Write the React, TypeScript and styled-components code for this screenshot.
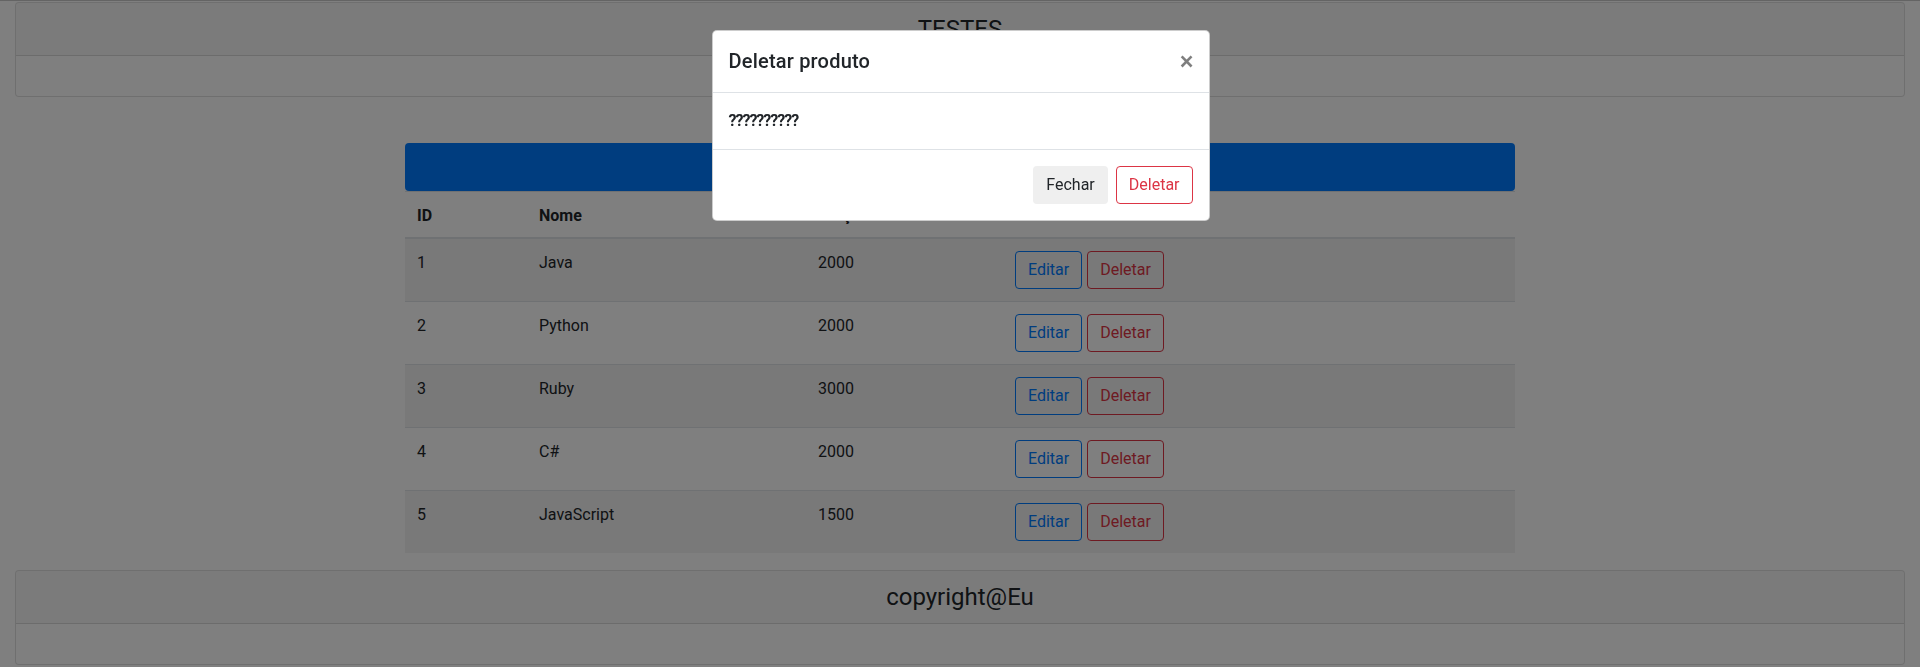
import React from "react";
import styled, { createGlobalStyle } from "styled-components";

const GlobalStyle = createGlobalStyle`
  html, body { margin: 0; padding: 0; overflow: hidden; }
  body {
    font-family: "Segoe UI", Roboto, "Noto Sans", sans-serif;
    font-size: 16px;
    line-height: 1.5;
    color: #212529;
    background: #ffffff;
    border-top: 1px solid #c8c8c8;
  }
  * { box-sizing: border-box; }
`;

const Fluid = styled.div`
  padding: 1px 15px 0;
`;

const Card = styled.div`
  border: 1px solid rgba(0, 0, 0, 0.125);
  border-radius: 4px;
  background: #fff;
  overflow: hidden;
`;

const CardHeader = styled.div`
  background: rgba(0, 0, 0, 0.03);
  border-bottom: 1px solid rgba(0, 0, 0, 0.125);
  padding: 12px 20px;
  text-align: center;
`;

const CardTitle = styled.h4`
  margin: 0;
  font-size: 24px;
  font-weight: 400;
  line-height: 28px;
`;

const CardBody = styled.div`
  height: 40px;
`;

const Container = styled.div`
  width: 1140px;
  margin: 0 auto;
  padding: 46px 15px 0;
`;

const Banner = styled.div`
  height: 48px;
  background: #007bff;
  border-radius: 4px;
`;

const Table = styled.table`
  width: 100%;
  border-collapse: separate;
  border-spacing: 0;
  margin-bottom: 16px;
`;

const Th = styled.th<{ $w?: number }>`
  width: ${(p) => (p.$w ? `${p.$w}px` : "auto")};
  text-align: left;
  vertical-align: bottom;
  padding: 12px 12px 9px;
  font-weight: 700;
  line-height: 24px;
  border-top: 1px solid #dee2e6;
  border-bottom: 2px solid #dee2e6;
`;

const Tr = styled.tr<{ $striped: boolean }>`
  background: ${(p) => (p.$striped ? "rgba(0,0,0,0.05)" : "transparent")};
  &:first-child > td {
    border-top: 0;
  }
`;

const Td = styled.td`
  padding: 12px;
  vertical-align: top;
  line-height: 24px;
  border-top: 1px solid #dee2e6;
`;

const Actions = styled.div`
  display: flex;
  gap: 5px;
`;

const Btn = styled.button<{ $variant: "primary" | "danger" | "light" }>`
  font-family: inherit;
  font-size: 16px;
  line-height: 24px;
  height: 38px;
  padding: 6px 12px;
  border-radius: 4px;
  cursor: pointer;
  border: 1px solid
    ${(p) =>
      p.$variant === "primary" ? "#007bff" : p.$variant === "danger" ? "#dc3545" : "transparent"};
  color: ${(p) =>
    p.$variant === "primary" ? "#007bff" : p.$variant === "danger" ? "#dc3545" : "#212529"};
  background: ${(p) => (p.$variant === "light" ? "#efefef" : "transparent")};
`;

const Backdrop = styled.div`
  position: fixed;
  inset: 0;
  background: rgba(0, 0, 0, 0.5);
`;

const ModalWrap = styled.div`
  position: fixed;
  inset: 0;
  display: flex;
  justify-content: center;
  align-items: flex-start;
  padding-top: 30px;
  padding-left: 1px;
`;

const ModalContent = styled.div`
  width: 498px;
  background: #fff;
  border: 1px solid rgba(0, 0, 0, 0.2);
  border-radius: 5px;
`;

const ModalHeader = styled.div`
  display: flex;
  align-items: flex-start;
  justify-content: space-between;
  padding: 15px 16px 16px;
  border-bottom: 1px solid #dee2e6;
`;

const ModalTitle = styled.h5`
  margin: 0;
  font-size: 20px;
  font-weight: 500;
  line-height: 30px;
  letter-spacing: 0.2px;
`;

const Close = styled.button`
  border: 0;
  background: transparent;
  padding: 0;
  margin: 0 -1px 0 0;
  font-family: inherit;
  font-size: 26px;
  font-weight: 500;
  line-height: 30px;
  color: #000;
  opacity: 0.5;
  text-shadow: 0 1px 0 #fff;
`;

const ModalBody = styled.div`
  padding: 16px;
  font-weight: 700;
  letter-spacing: -1px;
`;

const ModalFooter = styled.div`
  display: flex;
  justify-content: flex-end;
  align-items: center;
  gap: 8px;
  padding: 16px;
  border-top: 1px solid #dee2e6;
`;

const rows = [
  { id: 1, nome: "Java", preco: 2000 },
  { id: 2, nome: "Python", preco: 2000 },
  { id: 3, nome: "Ruby", preco: 3000 },
  { id: 4, nome: "C#", preco: 2000 },
  { id: 5, nome: "JavaScript", preco: 1500 },
];

export default function App() {
  return (
    <>
      <GlobalStyle />
      <Fluid>
        <Card>
          <CardHeader>
            <CardTitle>TESTES</CardTitle>
          </CardHeader>
          <CardBody />
        </Card>
      </Fluid>
      <Container>
        <Banner />
        <Table>
          <thead>
            <tr>
              <Th $w={122}>ID</Th>
              <Th $w={279}>Nome</Th>
              <Th $w={197}>Preço</Th>
              <Th>Editar</Th>
            </tr>
          </thead>
          <tbody>
            {rows.map((r, i) => (
              <Tr key={r.id} $striped={i % 2 === 0}>
                <Td>{r.id}</Td>
                <Td>{r.nome}</Td>
                <Td>{r.preco}</Td>
                <Td>
                  <Actions>
                    <Btn $variant="primary">Editar</Btn>
                    <Btn $variant="danger">Deletar</Btn>
                  </Actions>
                </Td>
              </Tr>
            ))}
          </tbody>
        </Table>
      </Container>
      <Fluid>
        <Card>
          <CardHeader>
            <CardTitle>copyright@Eu</CardTitle>
          </CardHeader>
          <CardBody />
        </Card>
      </Fluid>
      <Backdrop />
      <ModalWrap>
        <ModalContent>
          <ModalHeader>
            <ModalTitle>Deletar produto</ModalTitle>
            <Close aria-label="Close">×</Close>
          </ModalHeader>
          <ModalBody>??????????</ModalBody>
          <ModalFooter>
            <Btn $variant="light">Fechar</Btn>
            <Btn $variant="danger">Deletar</Btn>
          </ModalFooter>
        </ModalContent>
      </ModalWrap>
    </>
  );
}
